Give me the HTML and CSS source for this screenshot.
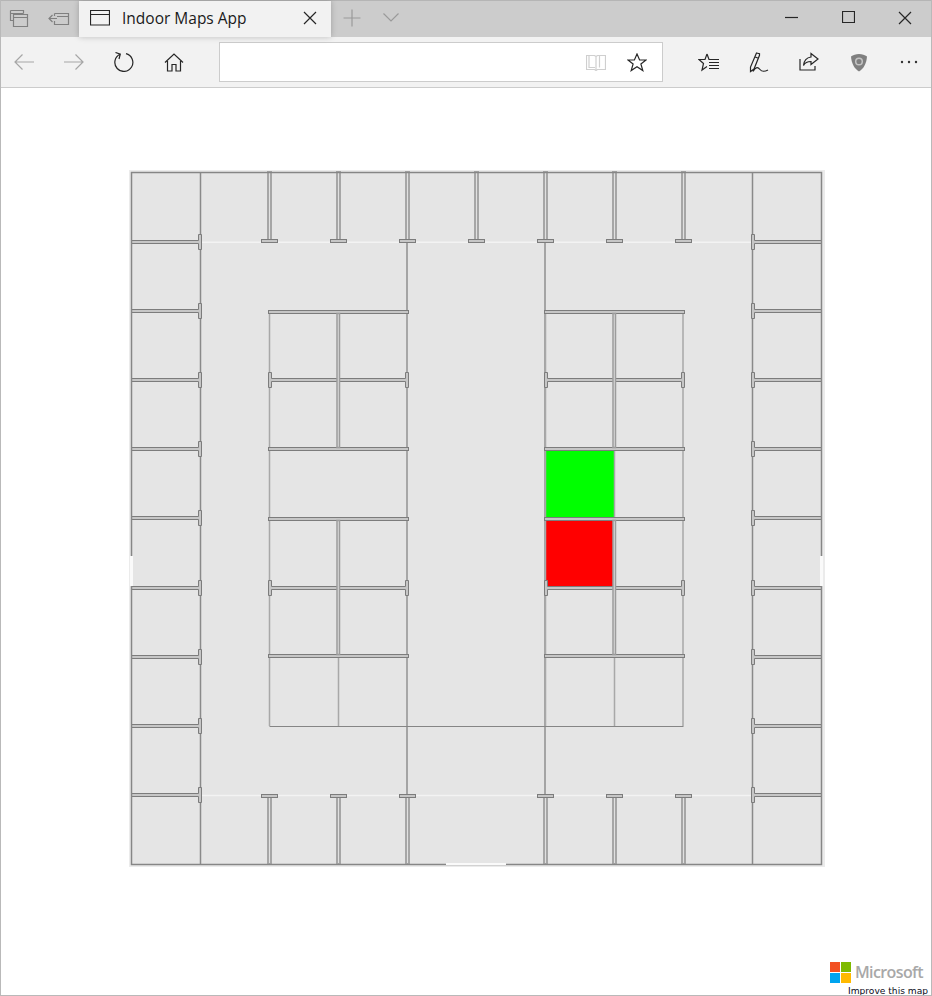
FILE: index.html
```html
<!DOCTYPE html>
<html lang="en">
<head>
<meta charset="utf-8">
<title>Indoor Maps App</title>
<link rel="stylesheet" href="styles.css">
</head>
<body>
<div class="window">
  <header class="chrome">
    <div class="tabstrip">
      <span class="btn strip-btn"><svg class="ico dim" width="20" height="20" viewBox="0 0 20 20"><path d="M1.5 2.5h13v3M1.5 2.5v10h3M1.5 5.5h13"/><path d="M4.5 6.5h14v12h-14zM4.5 9.5h14"/></svg></span>
      <span class="btn strip-btn"><svg class="ico dim" width="22" height="20" viewBox="0 0 22 20"><path d="M1 10.5h8M4.5 7l-3.500 3.500 3.500 3.500M6.500 5.500h14v11h-14V13M6.500 8V5.500M9 8.500h11.500"/></svg></span>
      <div class="tab">
        <svg class="ico" width="20" height="16" viewBox="0 0 20 16"><path d="M.5.500h19v14.500H.5zM.5 4.500h19"/></svg>
        <span class="tab-title">Indoor Maps App</span>
        <svg class="ico tab-close" width="14" height="14" viewBox="0 0 14 14"><path d="M1 1l12 12M13 1L1 13"/></svg>
      </div>
      <span class="btn new-tab"><svg class="ico faint" width="18" height="18" viewBox="0 0 18 18"><path d="M9 .5v17M.5 9h17"/></svg></span>
      <span class="btn tab-menu"><svg class="ico faint" width="16" height="9" viewBox="0 0 16 9"><path d="M.5.500l7.500 7.500 7.500-7.500"/></svg></span>
      <div class="winctl">
        <span class="btn win-btn"><svg class="ico" width="13" height="13" viewBox="0 0 13 13"><path d="M0 6.500h13"/></svg></span>
        <span class="btn win-btn"><svg class="ico" width="13" height="13" viewBox="0 0 13 13"><path d="M.5.500h12v11h-12z"/></svg></span>
        <span class="btn win-btn"><svg class="ico" width="14" height="14" viewBox="0 0 14 14"><path d="M1 1l12 12M13 1L1 13"/></svg></span>
      </div>
    </div>
    <div class="toolbar">
      <span class="btn tool"><svg class="ico pale" width="20" height="16" viewBox="0 0 20 16"><path d="M20 8H1M8.500.500L1 8l7.500 7.500"/></svg></span>
      <span class="btn tool"><svg class="ico pale" width="20" height="16" viewBox="0 0 20 16"><path d="M0 8h19M11.500.500L19 8l-7.500 7.500"/></svg></span>
      <span class="btn tool"><svg class="ico" width="20" height="20" viewBox="0 0 20 20"><path d="M6 2.300A9 9 0 1 0 12 1.700M1.500 .5L6.300 2.200 5 7"/></svg></span>
      <span class="btn tool"><svg class="ico" width="20" height="19" viewBox="0 0 20 19"><path d="M1 9.500L10 1l9 8.500M3.500 8v10h4.500v-6.500h4V18h4.500V8"/></svg></span>
      <div class="address">
        <span class="btn addr-book"><svg class="ico ghost" width="20" height="17" viewBox="0 0 20 17"><path d="M.5 1.500h8l1.500 1 1.500-1h8v14h-8l-1.500 1-1.500-1h-8zM10 2.500v13M3 1.500v12h6M13.500 1.500v12"/></svg></span>
        <span class="btn addr-star"><svg class="ico" width="20" height="19" viewBox="0 0 20 19"><path d="M10 1l2.600 6h6.400l-5.100 4 1.900 6.500L10 13.700l-5.800 3.800 1.900-6.500L1 7h6.400z"/></svg></span>
      </div>
      <div class="tool-right">
        <span class="btn tool"><svg class="ico" width="21" height="19" viewBox="0 0 21 19"><path d="M9 1l2 5.500h3M5.500 6.500H1l4.500 4L4 17l5-3.500M9 1L7 6.500H5.500M11 9.500h10M11 12.500h10M11 15.500h10M14 6.500h7"/></svg></span>
        <span class="btn tool"><svg class="ico" width="20" height="21" viewBox="0 0 20 21"><path d="M7.500 1l3 .7v1.600L5 17 1.500 19.500V15zM6.300 5l3 1.200M4 19.500c3-5 5-4.500 7-2s5 2 8 .5"/></svg></span>
        <span class="btn tool"><svg class="ico" width="20" height="20" viewBox="0 0 20 20"><path d="M1 7v11h15v-4M12 1.500l7 5.500-7 5.500V9.500c-4 0-6 1-7.500 4 .5-5 3.500-8 7.500-8.500z"/></svg></span>
        <span class="btn tool"><svg width="16" height="19" viewBox="0 0 16 19"><path class="shield" d="M8 1c3 0 6 1 8 2.500C15.500 10 13 15.500 8 18.500 3 15.500.5 10 0 3.500 2 2 5 1 8 1z"/><circle class="shield-mark" cx="8" cy="8.500" r="3.300"/></svg></span>
        <span class="btn tool"><svg width="18" height="4" viewBox="0 0 18 4"><circle class="dot" cx="2" cy="2" r="1.200"/><circle class="dot" cx="9" cy="2" r="1.200"/><circle class="dot" cx="16" cy="2" r="1.200"/></svg></span>
      </div>
    </div>
  </header>

  <main class="page">
    <svg class="plan" width="696" height="697" viewBox="129 170 696 697">
      <defs>
        <path id="wall-left" d="M131.500-1.500H198.500V-7.500H201.500V7.500H198.500V1.500H131.500Z"/>
        <path id="wall-right" d="M821.500-1.500H754.500V-7.500H751.500V7.500H754.500V1.500H821.500Z"/>
        <g id="spoke-top">
          <rect class="post" x="-1" y="172" width="3" height="68"/>
          <rect class="wall" x="-7.500" y="239.500" width="16" height="3"/>
        </g>
        <g id="spoke-bottom">
          <rect class="post" x="-1" y="797" width="3" height="67"/>
          <rect class="wall" x="-7.500" y="794.500" width="16" height="3"/>
        </g>
        <g id="block">
          <path class="thin" d="M269.500 311V726M407 311V726M338.500 656V726"/>
          <rect class="wall" x="268.500" y="310.500" width="140" height="3"/>
          <rect class="wall" x="268.500" y="447.500" width="140" height="3"/>
          <rect class="wall" x="268.500" y="517.500" width="140" height="3"/>
          <rect class="wall" x="268.500" y="654.500" width="140" height="3"/>
          <path class="wall" d="M271.500 378.500H405.500V372.500H408.500V387.500H405.500V381.500H271.500V387.500H268.500V372.500H271.500Z"/>
          <path class="wall" d="M271.500 586.500H405.500V580.500H408.500V595.500H405.500V589.500H271.500V595.500H268.500V580.500H271.500Z"/>
          <rect class="inner-post" x="337" y="313.500" width="2.500" height="134"/>
          <rect class="inner-post" x="337" y="520.500" width="2.500" height="134"/>
        </g>
      </defs>

      <rect class="halo" x="129" y="170" width="696" height="697"/>
      <rect class="floor" x="131.500" y="172.500" width="690" height="692"/>

      <path class="seam" d="M202 242.250H752M202 795.500H752"/>
      <path class="line" d="M200.500 172V864M752.500 172V864"/>
      <path class="mid" d="M407 243V795M545 243V795"/>

      <rect class="green" x="545" y="451" width="69" height="66"/>
      <rect class="red" x="546" y="521" width="67" height="65"/>

      <use href="#block"/>
      <use href="#block" x="276"/>
      <path class="thin" d="M614.500 451V517"/>
      <path class="dark" d="M269.500 726.500H683.500"/>

      <use class="wall" href="#wall-left" y="242"/>
      <use class="wall" href="#wall-left" y="311"/>
      <use class="wall" href="#wall-left" y="380"/>
      <use class="wall" href="#wall-left" y="449"/>
      <use class="wall" href="#wall-left" y="518"/>
      <use class="wall" href="#wall-left" y="588"/>
      <use class="wall" href="#wall-left" y="657"/>
      <use class="wall" href="#wall-left" y="726"/>
      <use class="wall" href="#wall-left" y="795"/>

      <use class="wall" href="#wall-right" y="242"/>
      <use class="wall" href="#wall-right" y="311"/>
      <use class="wall" href="#wall-right" y="380"/>
      <use class="wall" href="#wall-right" y="449"/>
      <use class="wall" href="#wall-right" y="518"/>
      <use class="wall" href="#wall-right" y="588"/>
      <use class="wall" href="#wall-right" y="657"/>
      <use class="wall" href="#wall-right" y="726"/>
      <use class="wall" href="#wall-right" y="795"/>

      <use href="#spoke-top" x="269"/>
      <use href="#spoke-top" x="338"/>
      <use href="#spoke-top" x="407"/>
      <use href="#spoke-top" x="476"/>
      <use href="#spoke-top" x="545"/>
      <use href="#spoke-top" x="614"/>
      <use href="#spoke-top" x="683"/>

      <use href="#spoke-bottom" x="269"/>
      <use href="#spoke-bottom" x="338"/>
      <use href="#spoke-bottom" x="407"/>
      <use href="#spoke-bottom" x="545"/>
      <use href="#spoke-bottom" x="614"/>
      <use href="#spoke-bottom" x="683"/>

      <rect class="frame" x="131.500" y="172.500" width="690" height="692"/>
      <rect class="door" x="446" y="863" width="60" height="2"/>
      <rect class="door" x="130" y="556" width="3" height="30"/>
      <rect class="door" x="820" y="556" width="3" height="30"/>
    </svg>

    <div class="attribution">
      <div class="brand">
        <span class="squares"><i class="sq sq-r"></i><i class="sq sq-g"></i><i class="sq sq-b"></i><i class="sq sq-y"></i></span>
        <span class="brand-name">Microsoft</span>
      </div>
      <div class="improve">Improve this map</div>
    </div>
  </main>
</div>
</body>
</html>
```

FILE: styles.css
```css
* { box-sizing: border-box; }
html, body { margin: 0; padding: 0; background: #fff; }
body { width: 932px; height: 996px; overflow: hidden; }

.window {
  width: 932px;
  height: 996px;
  border: 1px solid #b9b9b9;
  border-top: 0;
  display: flex;
  flex-direction: column;
  background: #fff;
}

.chrome { flex: none; height: 88px; display: flex; flex-direction: column; }

.btn { display: flex; align-items: center; justify-content: center; flex: none; }

.ico { fill: none; stroke: #262626; stroke-width: 1.2; display: block; }
.ico.dim { stroke: #808080; }
.ico.faint { stroke: #9a9a9a; }
.ico.pale { stroke: #a6a6a6; }
.ico.ghost { stroke: #cfcfcf; }

.tabstrip {
  height: 37px;
  flex: none;
  display: flex;
  align-items: center;
  padding-bottom: 3px;
  background: #cccccc;
  border-top: 1px solid #b5b5b5;
}
.strip-btn { width: 36px; height: 30px; margin-right: 4px; }

.tab {
  align-self: stretch;
  width: 252px;
  margin: 0 0 -3px -2px;
  padding: 0 14px 3px 11px;
  display: flex;
  align-items: center;
  gap: 12px;
  background: #f2f2f2;
  box-shadow: 0 0 6px rgba(0, 0, 0, .22);
  position: relative;
}
.tab-title {
  flex: 1;
  font: 15.5px/20px "Open Sans", "Noto Sans", sans-serif;
  color: #1a1a1a;
  white-space: nowrap;
}
.tab-close { flex: none; }

.new-tab { width: 42px; }
.tab-menu { width: 36px; }

.winctl { margin-left: auto; padding-right: 3px; display: flex; gap: 11px; }
.win-btn { width: 46px; height: 30px; }

.toolbar {
  height: 51px;
  flex: none;
  display: flex;
  align-items: center;
  gap: 5px;
  background: #f2f2f2;
  border-bottom: 1px solid #cccccc;
}
.tool { width: 45px; height: 40px; }

.address {
  width: 444px;
  height: 40px;
  margin-left: 18px;
  display: flex;
  align-items: center;
  justify-content: flex-end;
  background: #fff;
  border: 1px solid #cccccc;
}
.addr-book { width: 40px; }
.addr-star { width: 42px; margin-right: 4px; }

.tool-right { margin-left: auto; display: flex; gap: 5px; }

.shield { fill: #7f7f7f; }
.shield-mark { fill: none; stroke: #c4c4c4; stroke-width: 1.5; }
.dot { fill: #333333; }

.page { flex: 1; position: relative; padding: 82px 0 0 128px; overflow: hidden; }

.plan { display: block; }
.halo { fill: #ebebeb; }
.floor { fill: #e5e5e5; }
.seam { fill: none; stroke: #f3f3f3; stroke-width: 1.5; }
.line { fill: none; stroke: #8a8a8a; stroke-width: 1.5; }
.mid { fill: none; stroke: #a4a4a4; stroke-width: 2; }
.thin { fill: none; stroke: #a8a8a8; stroke-width: 1.5; }
.dark { fill: none; stroke: #858585; stroke-width: 1; }
.wall { fill: #c6c6c6; stroke: #7c7c7c; stroke-width: 1; }
.post { fill: #e0e0e0; stroke: #a6a6a6; stroke-width: 2; }
.inner-post { fill: #dcdcdc; stroke: #9c9c9c; stroke-width: 1.5; }
.frame { fill: none; stroke: #868686; stroke-width: 1.5; }
.door { fill: #fafafa; }
.green { fill: #00ff00; }
.red { fill: #ff0000; }

.attribution {
  position: absolute;
  right: 3px;
  bottom: -2px;
  display: flex;
  flex-direction: column;
  align-items: flex-end;
}
.brand { display: flex; align-items: center; gap: 4px; margin-right: 5px; }
.squares { display: grid; grid-template-columns: 10px 10px; grid-auto-rows: 10px; gap: 1px; }
.sq { display: block; }
.sq-r { background: #f25022; }
.sq-g { background: #7fba00; }
.sq-b { background: #00a4ef; }
.sq-y { background: #ffb900; }
.brand-name { font: 600 16px/22px "Open Sans", "Noto Sans", sans-serif; color: #a8a8a8; letter-spacing: -.6px; }
.improve { font: 9.1px/11px "DejaVu Sans", Verdana, sans-serif; color: #0a0a20; white-space: nowrap; margin-top: 3px; }
```
